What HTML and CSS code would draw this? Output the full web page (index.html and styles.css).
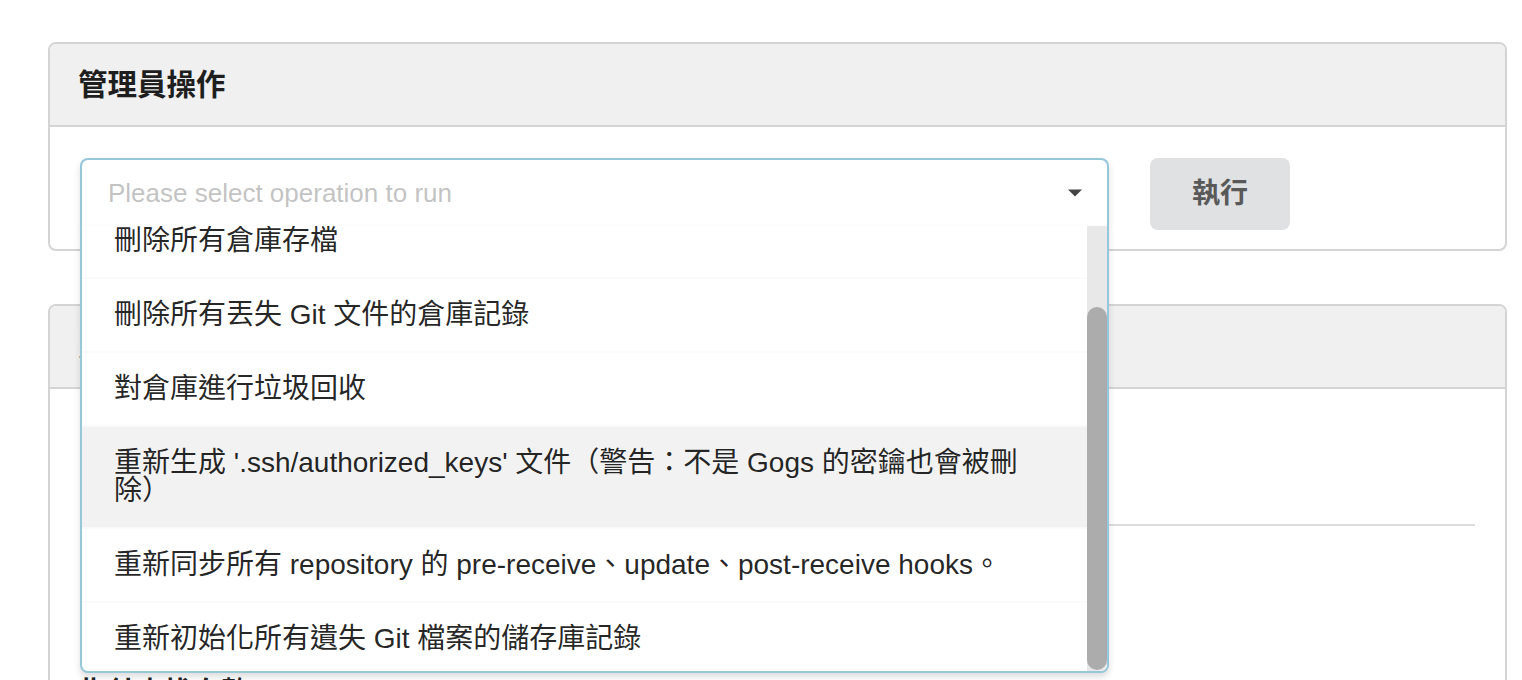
FILE: index.html
```html
<!DOCTYPE html>
<html lang="zh-Hant">
<head>
<meta charset="utf-8">
<title>管理員操作</title>
<link rel="stylesheet" href="styles.css">
</head>
<body>
<div class="page">
  <section class="panel">
    <h4 class="panel-header">管理員操作</h4>
    <div class="panel-body ops">
      <div class="dropdown">
        <div class="dd-box">
          <span class="placeholder">Please select operation to run</span>
          <svg class="caret" width="14" height="8" viewBox="0 0 14 8" aria-hidden="true"><path d="M0 0.5h14L7 7.5z" fill="#444"/></svg>
        </div>
        <div class="menu">
          <div class="menu-list">
            <div class="item">刪除所有未啟用的帳戶</div>
            <div class="item">刪除所有倉庫存檔</div>
            <div class="item">刪除所有丟失 Git 文件的倉庫記錄</div>
            <div class="item">對倉庫進行垃圾回收</div>
            <div class="item selected">重新生成 '.ssh/authorized_keys' 文件（警告：不是 Gogs 的密鑰也會被刪除）</div>
            <div class="item">重新同步所有 repository 的 pre-receive、update、post-receive hooks。</div>
            <div class="item">重新初始化所有遺失 Git 檔案的儲存庫記錄</div>
          </div>
          <div class="scrollbar" aria-hidden="true"><div class="thumb"></div></div>
        </div>
      </div>
      <button class="btn" type="button">執行</button>
    </div>
  </section>

  <section class="panel panel-stats">
    <h4 class="panel-header">系統監視狀態</h4>
    <div class="panel-body">
      <dl class="stats">
        <dt>服務運行時間</dt><dd>2 小時 14 分鐘</dd>
        <dt>當前 Goroutines 數量</dt><dd>21</dd>
      </dl>
      <div class="divider"></div>
      <dl class="stats">
        <dt>當前記憶體使用量</dt><dd>4.1 MiB</dd>
        <dt>所有被分配的記憶體</dt><dd>12 MiB</dd>
        <dt>記憶體佔用量</dt><dd>19 MiB</dd>
        <dt>指針查找次數</dt><dd>0</dd>
      </dl>
    </div>
  </section>
</div>
<script src="script.js"></script>
</body>
</html>
```

FILE: styles.css
```css
html, body {
  margin: 0;
  padding: 0;
  overflow: hidden;
  background: #fff;
}

body {
  font-family: "Liberation Sans", "Noto Sans CJK TC", sans-serif;
  color: rgba(0, 0, 0, 0.87);
}

.page {
  margin: 42px 15px 0 48px;
}

.panel {
  border: 2px solid #d4d4d5;
  border-radius: 8px;
  background: #fff;
}

.panel-stats {
  margin-top: 53px;
}

.panel-header {
  margin: 0;
  padding: 22px 28px;
  font-size: 29.5px;
  line-height: 37px;
  font-weight: bold;
  color: #1e1e1e;
  background: #f0f0f0;
  border-bottom: 2px solid #d4d4d5;
  border-radius: 6px 6px 0 0;
}

.panel-body {
  padding: 32px 30px;
}

.ops {
  display: flex;
  align-items: flex-start;
  gap: 41px;
  padding: 31px 30px 19px;
}

/* dropdown */
.dropdown {
  position: relative;
  flex: 0 0 1029px;
  z-index: 5;
}

.dd-box {
  display: flex;
  align-items: center;
  justify-content: space-between;
  padding: 20px 25px 20px 26px;
  border: 2px solid #96c8da;
  border-bottom: 0;
  border-radius: 8px 8px 0 0;
  background: #fff;
  box-shadow: 0 4px 6px 0 rgba(34, 36, 38, 0.15);
}

.placeholder {
  font-size: 26px;
  line-height: 26px;
  color: rgba(191, 191, 191, 0.95);
}

.caret {
  display: block;
}

.menu {
  position: absolute;
  top: 100%;
  left: 0;
  right: 0;
  display: flex;
  height: 445px;
  background: #fff;
  border: 2px solid #96c8da;
  border-top: 0;
  border-radius: 0 0 8px 8px;
  box-shadow: 0 4px 6px 0 rgba(34, 36, 38, 0.15);
  overflow: hidden;
}

.menu-list {
  flex: 1 1 auto;
  min-width: 0;
  overflow: hidden;
}

.scrollbar {
  flex: 0 0 20px;
  background: #e8e8e8;
}

.thumb {
  margin-top: 81px;
  height: 363px;
  border-radius: 10px;
  background: #acacac;
}

.item {
  padding: 22px 32px;
  font-size: 28px;
  line-height: 28px;
  color: rgba(0, 0, 0, 0.87);
  border-top: 2px solid #fafafa;
}

.item.selected {
  background: #f2f2f2;
}

.btn {
  flex: 0 0 auto;
  margin: 0;
  padding: 22px 42px;
  border: 0;
  border-radius: 8px;
  background: #e0e1e2;
  font-family: "Liberation Sans", "Noto Sans CJK TC", sans-serif;
  font-size: 28px;
  line-height: 28px;
  font-weight: bold;
  color: #595959;
}

/* stats */
.stats {
  display: grid;
  grid-template-columns: 502px 1fr;
  margin: 0;
  font-size: 28px;
  line-height: 40px;
}

.stats dt {
  font-weight: bold;
  color: #222;
}

.stats dd {
  margin: 0;
}

.divider {
  margin: 23px 0 27px;
  border-top: 2px solid #dcdcdc;
}
```

FILE: script.js
```js
document.querySelector('.menu-list').scrollTop = 97;
```
